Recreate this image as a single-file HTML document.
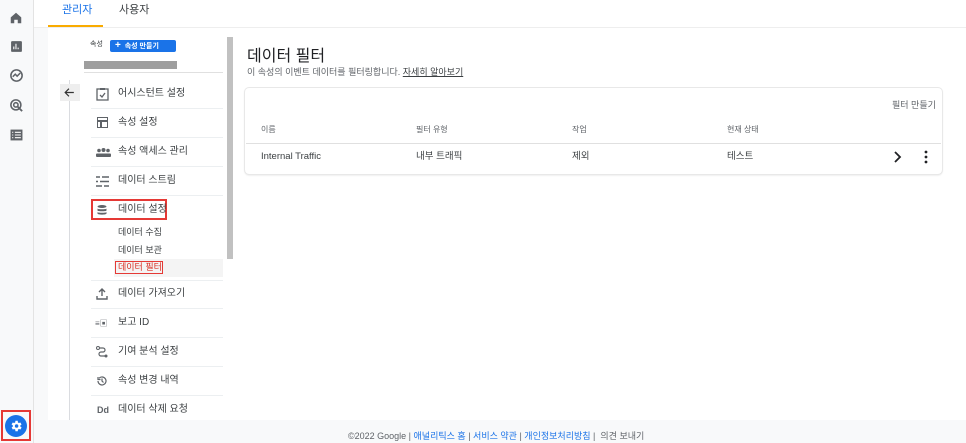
<!DOCTYPE html>
<html><head><meta charset="utf-8"><style>
*{margin:0;padding:0;box-sizing:border-box}
body{width:966px;height:443px;overflow:hidden;background:#f8f9fa;font-family:"Liberation Sans","Noto Sans CJK KR",sans-serif;color:#3c4043;position:relative}
.a{position:absolute}
.rail{left:0;top:0;width:34px;height:443px;background:#f8f9fa;border-right:1px solid #e3e3e3}
.panel{left:48px;top:28px;width:918px;height:392px;background:#fff}
.t{font-size:10px;white-space:nowrap;line-height:1.2}
.sep{height:1px;background:#eceff1;left:91px;width:132px}
.ico{color:#5f6368;font-size:12px;line-height:1}
</style></head><body>
<div class="a rail"></div>
<svg class="a" style="left:9px;top:11px" width="14" height="14" viewBox="0 0 24 24"><path d="M12 3L3 11v10h6v-6h6v6h6V11z" fill="#5f6368"/></svg>
<svg class="a" style="left:10px;top:40px" width="13" height="13" viewBox="0 0 24 24"><rect x="2" y="2" width="20" height="20" rx="2" fill="#5f6368"/><path d="M7 17v-5M11 17V7M15 17v-3" stroke="#fff" stroke-width="2"/></svg>
<svg class="a" style="left:9px;top:68px" width="15" height="15" viewBox="0 0 24 24"><circle cx="12" cy="12" r="9" fill="none" stroke="#5f6368" stroke-width="2.5"/><path d="M6 14l4-4 3 3 5-5" stroke="#5f6368" stroke-width="2.5" fill="none"/></svg>
<svg class="a" style="left:9px;top:98px" width="15" height="15" viewBox="0 0 24 24"><circle cx="11" cy="11" r="8" fill="none" stroke="#5f6368" stroke-width="2.5"/><circle cx="11" cy="11" r="3.5" fill="none" stroke="#5f6368" stroke-width="2.5"/><path d="M13 13l8 8" stroke="#5f6368" stroke-width="3"/></svg>
<svg class="a" style="left:10px;top:129px" width="13" height="12" viewBox="0 0 24 22"><rect x="1" y="1" width="22" height="20" fill="#5f6368"/><path d="M4 6h2M9 6h11M4 11h2M9 11h11M4 16h2M9 16h11" stroke="#fff" stroke-width="2"/></svg>
<div class="a" style="left:1px;top:410px;width:30px;height:31px;border:2px solid #e53935"></div>
<div class="a" style="left:5px;top:415px;width:22px;height:22px;border-radius:50%;background:#1a73e8"></div>
<svg class="a" style="left:9px;top:419px" width="14" height="14" viewBox="0 0 24 24"><path d="M19.4 13a7.5 7.5 0 000-2l2.1-1.6-2-3.5-2.5 1a7 7 0 00-1.7-1L15 3h-4l-.4 2.9a7 7 0 00-1.7 1l-2.5-1-2 3.5L6.6 11a7.5 7.5 0 000 2l-2.1 1.6 2 3.5 2.5-1a7 7 0 001.7 1L11 21h4l.4-2.9a7 7 0 001.7-1l2.5 1 2-3.5z" fill="#fff"/><circle cx="13" cy="12" r="3" fill="#1a73e8"/></svg>
<div class="a" style="left:34px;top:0;width:932px;height:28px;background:#fff;border-bottom:1px solid #eee"></div>
<div class="a t" style="left:62px;top:4px;font-size:11px;color:#1a73e8">관리자</div>
<div class="a t" style="left:119px;top:4px;font-size:11px;color:#3c4043">사용자</div>
<div class="a" style="left:48px;top:25px;width:55px;height:2px;background:#f9ab00"></div>
<div class="a panel"></div>
<div class="a t" style="left:90px;top:41px;font-size:7px">속성</div>
<div class="a t" style="left:110px;top:40px;width:66px;height:12px;background:#1a73e8;color:#fff;font-size:7px;border-radius:2px;padding:0 0 0 5px;font-weight:bold;line-height:12px"><span style="font-size:10px">+</span>&nbsp; 속성 만들기</div>
<div class="a" style="left:84px;top:61px;width:93px;height:8px;background:#9e9e9e"></div>
<div class="a" style="left:84px;top:72px;width:139px;height:1px;background:#e0e0e0"></div>
<div class="a" style="left:227px;top:37px;width:6px;height:222px;background:#c1c1c1"></div>
<div class="a" style="left:69px;top:80px;width:1px;height:340px;background:#dadce0"></div>
<div class="a" style="left:60px;top:84px;width:20px;height:17px;background:#eeeeee"></div>
<svg class="a" style="left:63px;top:86px" width="13" height="13" viewBox="0 0 24 24"><path d="M20 12H5M11 5l-7 7 7 7" stroke="#333" stroke-width="2.2" fill="none"/></svg>

<svg class="a" style="left:96px;top:87px" width="13" height="14" viewBox="0 0 13 14"><rect x="1" y="2" width="11" height="11" fill="none" stroke="#5f6368" stroke-width="1.3"/><rect x="4" y="1" width="5" height="2" fill="#5f6368"/><path d="M4 8l2 2 3-4" stroke="#5f6368" stroke-width="1.3" fill="none"/></svg>
<div class="a t" style="left:118px;top:88px">어시스턴트 설정</div>
<div class="a sep" style="top:108px"></div>
<div class="a" style="left:97px;top:117px;width:11px;height:11px;border:1.5px solid #5f6368"></div><div class="a" style="left:97px;top:120px;width:11px;height:1.5px;background:#5f6368"></div><div class="a" style="left:100px;top:120px;width:1.5px;height:8px;background:#5f6368"></div>
<div class="a t" style="left:118px;top:117px">속성 설정</div>
<div class="a sep" style="top:137px"></div>
<svg class="a" style="left:96px;top:148px" width="15" height="9" viewBox="0 0 15 9"><circle cx="3" cy="2.5" r="1.8" fill="#5f6368"/><circle cx="7.5" cy="2" r="2" fill="#5f6368"/><circle cx="12" cy="2.5" r="1.8" fill="#5f6368"/><rect x="0" y="5.5" width="15" height="3.5" rx="1" fill="#5f6368"/></svg>
<div class="a t" style="left:118px;top:146px">속성 액세스 관리</div>
<div class="a sep" style="top:166px"></div>
<svg class="a" style="left:96px;top:176px" width="13" height="11" viewBox="0 0 13 11"><path d="M0 1h4M6 1h7M0 5.5h2M4 5.5h9M0 10h6M8 10h5" stroke="#5f6368" stroke-width="1.5"/></svg>
<div class="a t" style="left:118px;top:175px">데이터 스트림</div>
<div class="a sep" style="top:195px"></div>
<div class="a" style="left:91px;top:199px;width:76px;height:21px;border:2px solid #e53935"></div>
<svg class="a" style="left:96px;top:204px" width="12" height="12" viewBox="0 0 24 24"><ellipse cx="12" cy="5" rx="9" ry="3" fill="#5f6368"/><path d="M3 9c0 2 18 2 18 0v4c0 2-18 2-18 0zM3 16c0 2 18 2 18 0v3c0 3-18 3-18 0z" fill="#5f6368"/></svg>
<div class="a t" style="left:118px;top:204px">데이터 설정</div>
<div class="a t" style="left:118px;top:227px;font-size:9px">데이터 수집</div>
<div class="a t" style="left:118px;top:245px;font-size:9px">데이터 보관</div>
<div class="a" style="left:114px;top:259px;width:109px;height:18px;background:#f4f4f4"></div>
<div class="a t" style="left:115px;top:261px;width:48px;height:13px;border:1.5px solid #e53935;font-size:9px;color:#d93025;padding-left:2px;line-height:10px">데이터 필터</div>
<div class="a" style="left:91px;top:280px;width:132px;height:1px;background:#eceff1"></div>
<svg class="a" style="left:96px;top:288px" width="12" height="12" viewBox="0 0 12 12"><path d="M6 8V1M3 4l3-3 3 3M1 8v3h10V8" stroke="#5f6368" stroke-width="1.4" fill="none"/></svg>
<div class="a t" style="left:118px;top:288px">데이터 가져오기</div>
<div class="a sep" style="top:308px"></div>
<div class="a t" style="left:95px;top:319px;font-size:8px;color:#5f6368">≡▣</div><div class="a t" style="left:118px;top:317px">보고 ID</div>
<div class="a sep" style="top:337px"></div>
<svg class="a" style="left:96px;top:346px" width="12" height="12" viewBox="0 0 12 12"><circle cx="2" cy="2" r="1.5" fill="none" stroke="#5f6368"/><path d="M3.5 2H7a2 2 0 010 4H5a2 2 0 000 4h4" stroke="#5f6368" fill="none" stroke-width="1.2"/><circle cx="10" cy="10" r="1.5" fill="#5f6368"/></svg>
<div class="a t" style="left:118px;top:346px">기여 분석 설정</div>
<div class="a sep" style="top:366px"></div>
<svg class="a" style="left:96px;top:375px" width="12" height="12" viewBox="0 0 24 24"><path d="M4 12a8 8 0 102.3-5.7M4 4v5h5" stroke="#5f6368" stroke-width="2.4" fill="none"/><path d="M12 7v5l3 3" stroke="#5f6368" stroke-width="2.4" fill="none"/></svg>
<div class="a t" style="left:118px;top:375px">속성 변경 내역</div>
<div class="a sep" style="top:395px"></div>
<div class="a t" style="left:97px;top:405px;font-size:9px;font-weight:bold;color:#5f6368">Dd</div><div class="a t" style="left:118px;top:404px">데이터 삭제 요청</div>

<div class="a t" style="left:247px;top:47px;font-size:16px;color:#202124">데이터 필터</div>
<div class="a t" style="left:247px;top:67px;font-size:9px;color:#5f6368">이 속성의 이벤트 데이터를 필터링합니다. <span style="text-decoration:underline;color:#3c4043">자세히 알아보기</span></div>
<div class="a" style="left:245px;top:88px;width:697px;height:86px;border-radius:4px;box-shadow:0 0 0 1px #e8e8e8,0 1px 2px rgba(0,0,0,.15)"></div>
<div class="a t" style="left:892px;top:100px;font-size:9px;color:#5f6368">필터 만들기</div>
<div class="a t" style="left:261px;top:125px;font-size:8px;color:#5f6368">이름</div>
<div class="a t" style="left:416px;top:125px;font-size:8px;color:#5f6368">필터 유형</div>
<div class="a t" style="left:572px;top:125px;font-size:8px;color:#5f6368">작업</div>
<div class="a t" style="left:727px;top:125px;font-size:8px;color:#5f6368">현재 상태</div>
<div class="a" style="left:246px;top:143px;width:695px;height:1px;background:#e0e0e0"></div>
<div class="a t" style="left:261px;top:151px;font-size:9.5px">Internal Traffic</div>
<div class="a t" style="left:416px;top:151px;font-size:9.5px">내부 트래픽</div>
<div class="a t" style="left:572px;top:151px;font-size:9.5px">제외</div>
<div class="a t" style="left:727px;top:151px;font-size:9.5px">테스트</div>
<svg class="a" style="left:892px;top:151px" width="10" height="12" viewBox="0 0 10 12"><path d="M3 1l5 5-5 5" stroke="#202124" stroke-width="1.8" fill="none"/></svg>
<svg class="a" style="left:923px;top:150px" width="6" height="14" viewBox="0 0 6 14"><circle cx="3" cy="2" r="1.4" fill="#202124"/><circle cx="3" cy="7" r="1.4" fill="#202124"/><circle cx="3" cy="12" r="1.4" fill="#202124"/></svg>

<div class="a t" style="left:348px;top:431px;font-size:9px;color:#5f6368">©2022 Google | <span style="color:#1a73e8">애널리틱스 홈</span> | <span style="color:#1a73e8">서비스 약관</span> | <span style="color:#1a73e8">개인정보처리방침</span> | &nbsp;의견 보내기</div>
</body></html>
